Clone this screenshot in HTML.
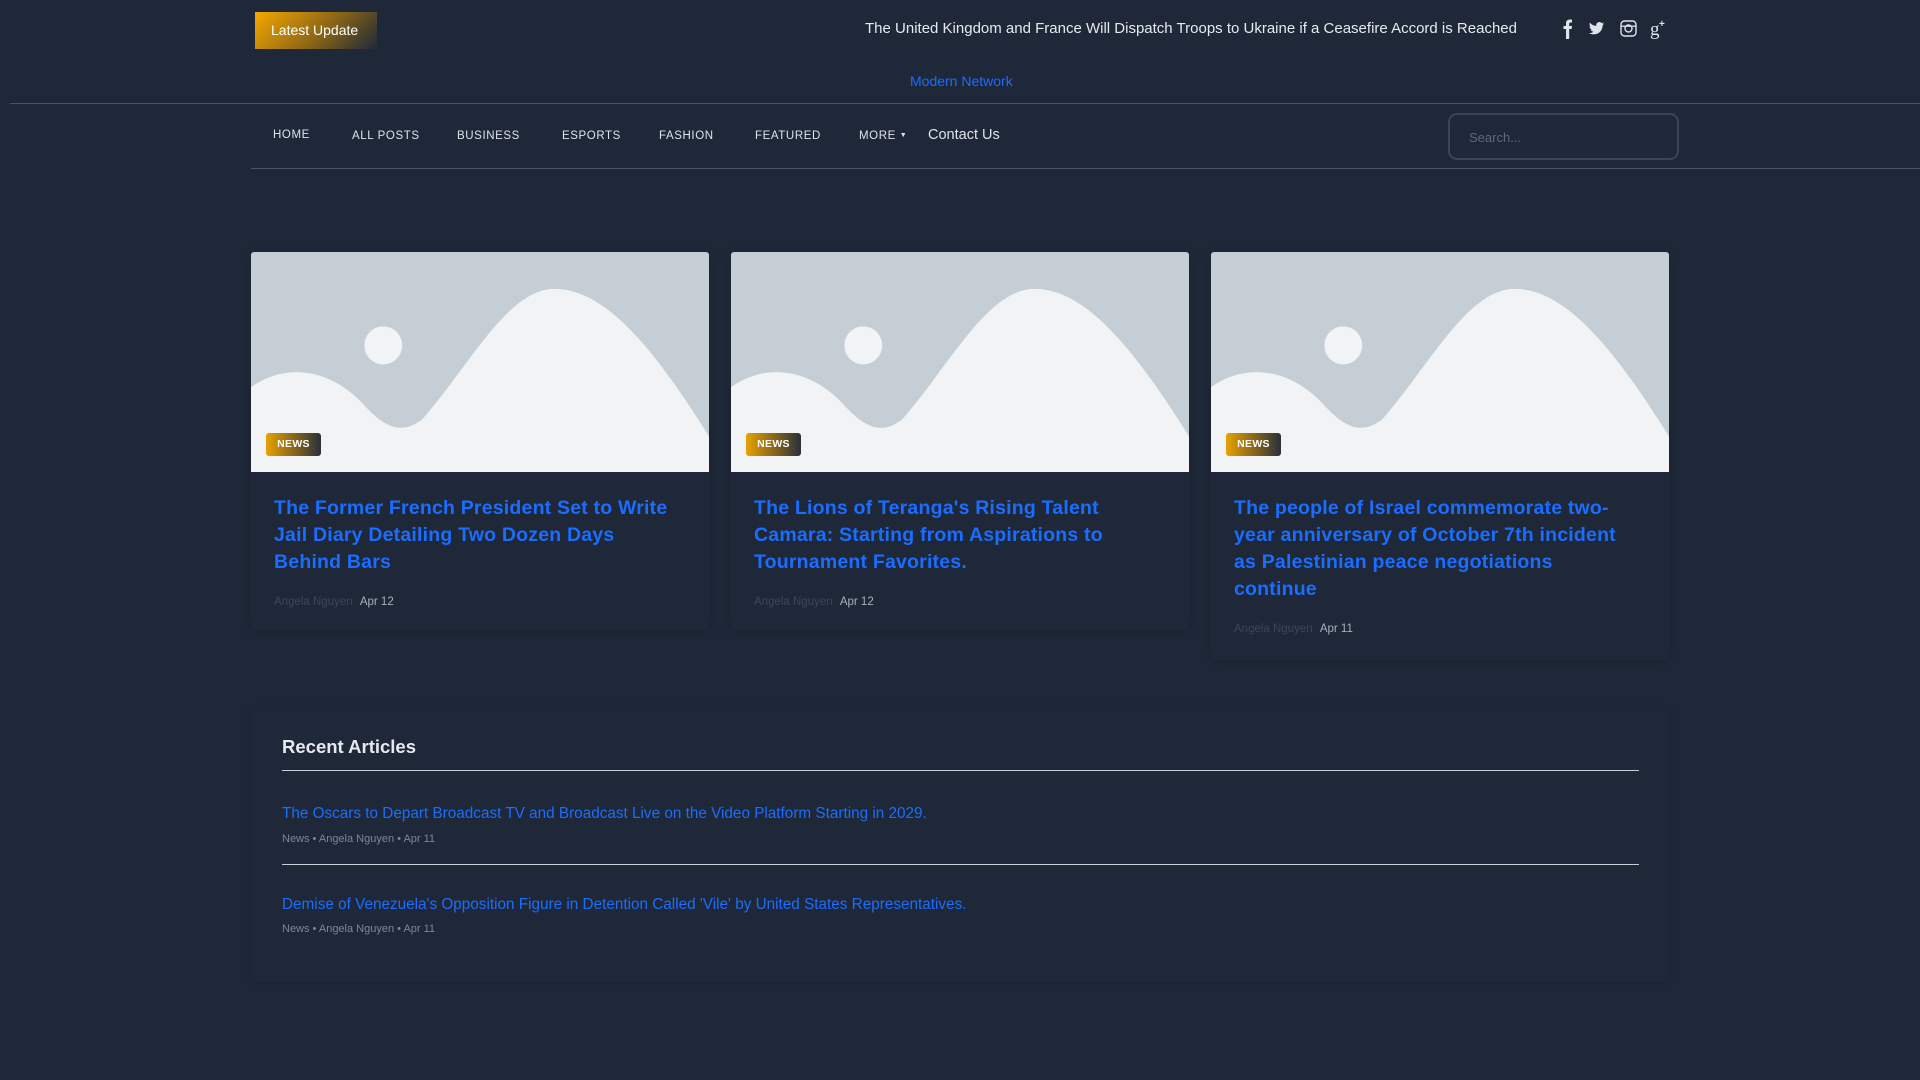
<!DOCTYPE html>
<html><head><meta charset="utf-8"><style>
*{margin:0;padding:0;box-sizing:border-box}
body{width:1920px;height:1080px;background:#1f2839;font-family:"Liberation Sans",sans-serif;position:relative;overflow:hidden;color:#e6e9ee}
.abs{position:absolute}
.latest{left:255px;top:12px;width:122px;height:37px;background:linear-gradient(135deg,#f5a800 0%,#8a6516 55%,#1f2839 100%);color:#fff;font-size:14px;line-height:37px;padding-left:16px}
.ticker{left:865px;top:20px;width:665px;overflow:hidden;white-space:nowrap;font-size:15px;color:#e6e9ee}
.brand{left:910px;top:73px;font-size:14px;color:#1a6dff}
.hr1{left:10px;top:103px;width:1910px;height:1px;background:#4a5466}
.hr2{left:251px;top:168px;width:1669px;height:1px;background:#4a5466}
.nav{top:130px;font-size:11.5px;letter-spacing:.6px;color:#dfe3ea}
.search{left:1448px;top:113px;width:231px;height:47px;border:2px solid #3a4558;border-radius:9px;font-size:13px;color:#5d6878;padding:15px 0 0 19px}
.card{width:458px;background:#1f2839;box-shadow:0 2px 10px rgba(0,0,0,.18)}
.img{width:458px;height:220px;position:relative;background:#c5cdd5;overflow:hidden;border-radius:3px 3px 0 0}
.badge{position:absolute;left:15px;top:181px;width:55px;height:23px;border-radius:3px;background:linear-gradient(90deg,#e8a100,#2a2f3a);color:#fff;font-size:10.5px;line-height:23px;text-align:center;font-weight:bold;letter-spacing:.3px}
.title{padding:23px 23px 0 23px;color:#1a6dff;font-size:19.5px;font-weight:bold;line-height:27px;letter-spacing:.2px}
.meta{padding:20px 23px 0 23px;font-size:11.5px;color:#3d4757}
.meta span{color:#a9b0bb;margin-left:4px}
.recent{left:251px;top:708px;width:1418px;height:274px;background:#1f2839;box-shadow:0 2px 10px rgba(0,0,0,.12)}
.rl{position:absolute;left:31px;height:1px;width:1357px;background:#c9ced6}
.rt{position:absolute;left:31px;font-size:15.3px;color:#1a6dff;white-space:nowrap}
.rm{position:absolute;left:31px;font-size:11px;color:#7d8795}
</style></head><body>
<div class="abs latest">Latest Update</div>
<div class="abs ticker">The United Kingdom and France Will Dispatch Troops to Ukraine if a Ceasefire Accord is Reached</div>
<svg class="abs" style="left:1560px;top:18px" width="110" height="22" viewBox="0 0 110 22" fill="#dfe3ea">
<path d="M6 21V11H3.5V8H6V5.5C6 3 7.3 1.5 10 1.5H12V4.5H10.5C9.5 4.5 9.2 5 9.2 6V8H12L11.6 11H9.2V21Z"/>
<path d="M44 5.5c-.6.3-1.2.4-1.8.5.7-.4 1.1-1 1.4-1.7-.6.4-1.3.6-2 .8a3.1 3.1 0 0 0-5.3 2.8A8.8 8.8 0 0 1 29.9 4.6a3.1 3.1 0 0 0 1 4.1c-.5 0-1-.2-1.4-.4 0 1.5 1.1 2.8 2.5 3.1-.5.1-.9.2-1.4.1.4 1.2 1.6 2.1 2.9 2.2A6.2 6.2 0 0 1 29 15c1.4.9 3 1.4 4.8 1.4 5.7 0 8.9-4.8 8.9-8.9v-.4c.5-.4 1-.9 1.3-1.6z"/>
<rect x="61" y="3" width="15" height="15" rx="3.5" fill="none" stroke="#dfe3ea" stroke-width="1.4"/>
<circle cx="68.5" cy="10.5" r="3.5" fill="none" stroke="#dfe3ea" stroke-width="1.4"/>
<rect x="61" y="7.5" width="15" height="1.3"/>
<text x="90" y="17" font-family="Liberation Serif" font-size="19">g</text><text x="99" y="9" font-size="10" font-family="Liberation Sans" font-weight="bold">+</text>
</svg>
<div class="abs brand">Modern Network</div>
<div class="abs hr1"></div>
<div class="abs nav" style="left:273px;top:129px">HOME</div>
<div class="abs nav" style="left:352px">ALL POSTS</div>
<div class="abs nav" style="left:457px">BUSINESS</div>
<div class="abs nav" style="left:562px">ESPORTS</div>
<div class="abs nav" style="left:659px">FASHION</div>
<div class="abs nav" style="left:755px">FEATURED</div>
<div class="abs nav" style="left:859px">MORE <span style="font-size:7px;vertical-align:2px">▼</span></div>
<div class="abs" style="left:928px;top:127px;font-size:14.5px;color:#dfe3ea">Contact Us</div>
<div class="abs search">Search...</div>
<div class="abs hr2"></div>

<div class="abs card" style="left:251px;top:252px;height:378px">
<div class="img"><svg width="458" height="220" viewBox="0 0 374 179" preserveAspectRatio="none"><path d="M0 110C25 92 60 92 90 122C108 142 122 150 140 136C180 90 210 30 248 30C290 30 330 80 374 150V179H0Z" fill="#f1f3f5"/><circle cx="108" cy="76" r="15.5" fill="#f1f3f5"/></svg><div class="badge">NEWS</div></div>
<div class="title">The Former French President Set to Write<br>Jail Diary Detailing Two Dozen Days<br>Behind Bars</div>
<div class="meta">Angela Nguyen <span>Apr 12</span></div></div>

<div class="abs card" style="left:731px;top:252px;height:378px">
<div class="img"><svg width="458" height="220" viewBox="0 0 374 179" preserveAspectRatio="none"><path d="M0 110C25 92 60 92 90 122C108 142 122 150 140 136C180 90 210 30 248 30C290 30 330 80 374 150V179H0Z" fill="#f1f3f5"/><circle cx="108" cy="76" r="15.5" fill="#f1f3f5"/></svg><div class="badge">NEWS</div></div>
<div class="title">The Lions of Teranga's Rising Talent<br>Camara: Starting from Aspirations to<br>Tournament Favorites.</div>
<div class="meta">Angela Nguyen <span>Apr 12</span></div></div>

<div class="abs card" style="left:1211px;top:252px;height:408px">
<div class="img"><svg width="458" height="220" viewBox="0 0 374 179" preserveAspectRatio="none"><path d="M0 110C25 92 60 92 90 122C108 142 122 150 140 136C180 90 210 30 248 30C290 30 330 80 374 150V179H0Z" fill="#f1f3f5"/><circle cx="108" cy="76" r="15.5" fill="#f1f3f5"/></svg><div class="badge">NEWS</div></div>
<div class="title">The people of Israel commemorate two-<br>year anniversary of October 7th incident<br>as Palestinian peace negotiations<br>continue</div>
<div class="meta">Angela Nguyen <span>Apr 11</span></div></div>

<div class="abs recent">
<div style="position:absolute;left:31px;top:28px;font-size:18.5px;font-weight:bold;color:#e6e9ee">Recent Articles</div>
<div class="rl" style="top:62px"></div>
<div class="rt" style="top:97px">The Oscars to Depart Broadcast TV and Broadcast Live on the Video Platform Starting in 2029.</div>
<div class="rm" style="top:125px">News • Angela Nguyen • Apr 11</div>
<div class="rl" style="top:156px"></div>
<div class="rt" style="top:188px">Demise of Venezuela's Opposition Figure in Detention Called 'Vile' by United States Representatives.</div>
<div class="rm" style="top:215px">News • Angela Nguyen • Apr 11</div>
</div>
</body></html>
